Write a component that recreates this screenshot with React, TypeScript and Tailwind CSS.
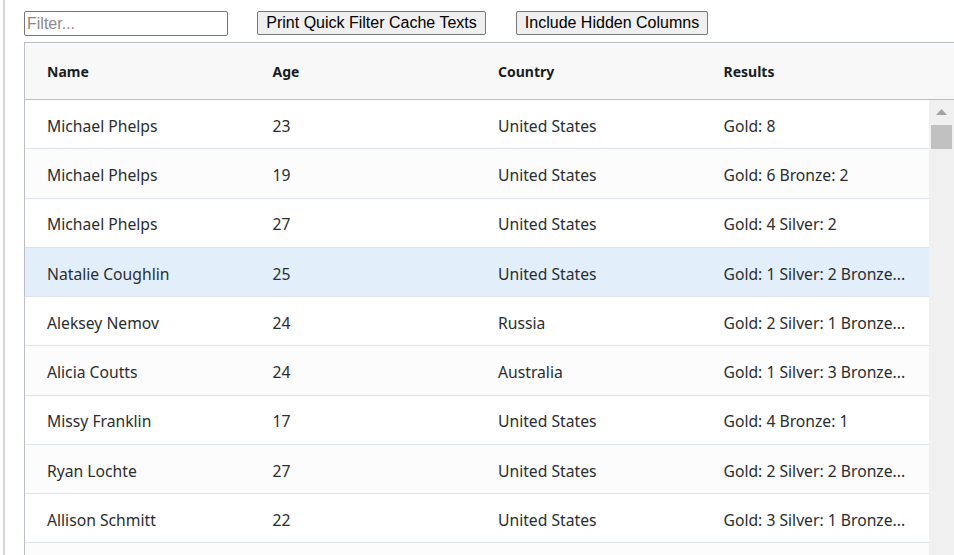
import React from "react";

const rows = [
  ["Michael Phelps", "23", "United States", "Gold: 8"],
  ["Michael Phelps", "19", "United States", "Gold: 6 Bronze: 2"],
  ["Michael Phelps", "27", "United States", "Gold: 4 Silver: 2"],
  ["Natalie Coughlin", "25", "United States", "Gold: 1 Silver: 2 Bronze..."],
  ["Aleksey Nemov", "24", "Russia", "Gold: 2 Silver: 1 Bronze..."],
  ["Alicia Coutts", "24", "Australia", "Gold: 1 Silver: 3 Bronze..."],
  ["Missy Franklin", "17", "United States", "Gold: 4 Bronze: 1"],
  ["Ryan Lochte", "27", "United States", "Gold: 2 Silver: 2 Bronze..."],
  ["Allison Schmitt", "22", "United States", "Gold: 3 Silver: 1 Bronze..."],
  ["", "", "", ""],
];

export default function App() {
  return (
    <div className="w-[954px] h-[555px] overflow-hidden bg-white relative">
      <div className="absolute left-[3px] top-0 w-[2px] h-[555px] bg-[#d4d4dc]" />
      <div className="pl-[24px] pt-[11px]">
        <div className="flex items-start h-[31px]" style={{ fontFamily: "'Liberation Sans', Arial, sans-serif" }}>
          <input
            placeholder="Filter..."
            className="w-[204px] h-[25px] border border-[#767676] rounded-[2px] px-[2px] text-[16px] text-black placeholder:text-[#8a8a8a] outline-none"
          />
          <button className="ml-[29px] w-[229px] h-[24px] border border-[#767676] rounded-[2px] bg-[#efefef] text-[16px] text-black leading-none">
            Print Quick Filter Cache Texts
          </button>
          <button className="ml-[30px] w-[192px] h-[24px] border border-[#767676] rounded-[2px] bg-[#efefef] text-[16px] text-black leading-none">
            Include Hidden Columns
          </button>
        </div>
        <div
          className="w-[950px] border-l border-t border-[#babfc7] text-[#2a2e30]"
          style={{ fontFamily: "'Noto Sans', 'Open Sans', sans-serif" }}
        >
          <div className="flex items-center h-[57px] bg-[#f8f8f8] border-b border-[#babfc7] text-[14px] font-bold text-[#181d1f]">
            <div className="w-[225.5px] pl-[22px]">Name</div>
            <div className="w-[225.5px] pl-[22px]">Age</div>
            <div className="w-[225.5px] pl-[22px]">Country</div>
            <div className="w-[225.5px] pl-[22px]">Results</div>
          </div>
          <div className="flex">
            <div className="w-[904px]">
              {rows.map((r, i) => (
                <div
                  key={i}
                  className={`flex items-center pt-[5px] h-[49.25px] border-b border-[#dde2eb] text-[15.7px] ${
                    i === 3 ? "bg-[#e2effa]" : i % 2 === 1 ? "bg-[#fcfcfc]" : "bg-white"
                  }`}
                >
                  <div className="w-[225.5px] pl-[22px] whitespace-nowrap">{r[0]}</div>
                  <div className="w-[225.5px] pl-[22px]">{r[1]}</div>
                  <div className="w-[225.5px] pl-[22px]">{r[2]}</div>
                  <div className="w-[225.5px] pl-[22px] whitespace-nowrap">{r[3]}</div>
                </div>
              ))}
            </div>
            <div className="w-[25px] bg-[#f0f0f0] flex flex-col items-center pt-[9px]">
              <svg width="11" height="6" viewBox="0 0 11 6">
                <polygon points="5.5,0 11,6 0,6" fill="#a3a3a3" />
              </svg>
              <div className="mt-[10px] w-[21px] h-[24px] bg-[#c1c1c1]" />
            </div>
          </div>
        </div>
      </div>
    </div>
  );
}
